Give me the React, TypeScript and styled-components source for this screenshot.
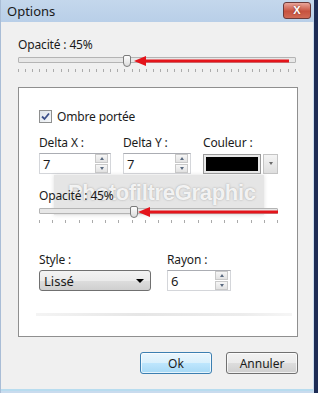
import React from 'react';
import styled, { createGlobalStyle } from 'styled-components';

const Global = createGlobalStyle`
  html, body { margin: 0; padding: 0; background: #1d2c55; }
  body { font-family: "Noto Sans", "Open Sans", "DejaVu Sans", sans-serif; font-size: 12px; color: #1b1b1b; }
`;

const Window = styled.div`
  width: 314px;
  height: 393px;
  display: flex;
  flex-direction: column;
  background: #c9dbee;
  box-sizing: border-box;
  border-left: 1px solid #a9bdd6;
`;

const TitleBar = styled.div`
  height: 22px;
  display: flex;
  align-items: center;
  padding: 0 3px 0 6px;
  background: linear-gradient(#c4d7ec, #b9cfe8);
`;

const Title = styled.div`
  font-size: 13px;
  color: #1a1a1a;
`;

const CloseButton = styled.div`
  margin-left: auto;
  width: 26px;
  height: 15px;
  margin-top: -2px;
  border: 1px solid #6b3a3a;
  border-radius: 3px;
  background: linear-gradient(#e9a59a, #c7523f 55%, #d06a55);
  display: flex;
  align-items: center;
  justify-content: center;
  color: #fff;
  font-size: 11px;
  font-weight: bold;
  font-family: "Liberation Sans", sans-serif;
  text-shadow: 0 0 2px #7a2a20;
`;

const Body = styled.div`
  flex: 1;
  background: #f0f0f0;
  display: flex;
  flex-direction: column;
  padding: 15px 16px 0 17px;
  margin: 0 1px 2px 0;
  border-bottom: 2px solid #b8dcef;
`;

const Label = styled.div`
  line-height: 15px;
  white-space: nowrap;
  letter-spacing: -0.15px;
`;

const SliderBox = styled.div<{ $w: number }>`
  position: relative;
  width: ${p => p.$w}px;
  height: 20px;
  margin-top: 3px;
`;

const Track = styled.div`
  position: absolute;
  left: 0;
  right: 0;
  top: 2px;
  height: 4px;
  background: #e7e7e7;
  border: 1px solid #b4b4b4;
  border-radius: 1px;
`;

const Thumb = styled.div`
  position: absolute;
  top: 0;
  width: 6px;
  height: 10px;
  background: linear-gradient(#fdfdfd, #dcdcdc);
  border: 1px solid #7b7b7b;
  border-radius: 2px 2px 4px 4px;
`;

const Ticks = styled.div`
  position: absolute;
  left: 0;
  right: 0;
  top: 14px;
  display: flex;
  justify-content: space-between;
`;

const Tick = styled.div`
  width: 1px;
  height: 3px;
  background: #ababab;
`;

const ArrowSvg = styled.svg`
  position: absolute;
  top: 0;
`;

function Slider({ width, thumb, ticks, arrowFrom, arrowTo }: { width: number; thumb: number; ticks: number; arrowFrom: number; arrowTo: number }) {
  const len = arrowTo - arrowFrom;
  return (
    <SliderBox $w={width}>
      <Track />
      <Ticks>
        {Array.from({ length: ticks }).map((_, i) => <Tick key={i} />)}
      </Ticks>
      <Thumb style={{ left: thumb }} />
      <ArrowSvg width={len} height={12} style={{ left: arrowFrom }} viewBox={`0 0 ${len} 12`}>
        <polygon points="0,6 12,1 12,11" fill="#e4141b" />
        <rect x={10} y={4.5} width={len - 10} height={3} fill="#e4141b" />
      </ArrowSvg>
    </SliderBox>
  );
}

const Panel = styled.div`
  position: relative;
  margin-top: 12px;
  width: 280px;
  height: 250px;
  box-sizing: border-box;
  background: #fff;
  border: 1px solid #8f8f8f;
  padding: 21px 0 0 20px;
  display: flex;
  flex-direction: column;
`;

const CheckRow = styled.div`
  display: flex;
  align-items: center;
  gap: 5px;
`;

const CheckBox = styled.div`
  width: 11px;
  height: 11px;
  border: 1px solid #8e8f8f;
  background: linear-gradient(135deg, #dde3ea, #f6f8fa);
  display: flex;
  align-items: center;
  justify-content: center;
`;

const FieldRow = styled.div<{ $gap: number; $top: number }>`
  display: flex;
  gap: ${p => p.$gap}px;
  margin-top: ${p => p.$top}px;
`;

const Field = styled.div`
  display: flex;
  flex-direction: column;
  gap: 3px;
`;

const InputBox = styled.div<{ $w: number }>`
  width: ${p => p.$w}px;
  height: 21px;
  box-sizing: border-box;
  border: 1px solid #d4d6da;
  border-top-color: #abadb3;
  background: #fff;
  display: flex;
  align-items: center;
  padding: 0 2px 0 3px;
`;

const Value = styled.div`
  flex: 1;
  font-size: 13px;
`;

const Spin = styled.div`
  display: flex;
  flex-direction: column;
  gap: 1px;
`;

const SpinBtn = styled.div<{ $up?: boolean }>`
  width: 11px;
  height: 7px;
  border: 1px solid #c9c9c9;
  background: linear-gradient(#f6f6f6, #e2e2e2);
  display: flex;
  align-items: center;
  justify-content: center;
  &::after {
    content: '';
    border-left: 2.5px solid transparent;
    border-right: 2.5px solid transparent;
    ${p => (p.$up ? 'border-bottom: 3px solid #5a6a80;' : 'border-top: 3px solid #5a6a80;')}
  }
`;

function SpinInput({ value, width }: { value: string; width: number }) {
  return (
    <InputBox $w={width}>
      <Value>{value}</Value>
      <Spin>
        <SpinBtn $up />
        <SpinBtn />
      </Spin>
    </InputBox>
  );
}

const ColorPicker = styled.div`
  display: flex;
  align-items: center;
  gap: 3px;
  height: 21px;
`;

const Swatch = styled.div`
  width: 52px;
  height: 14px;
  background: #000;
  border: 2px solid #e8e8e8;
  outline: 1px solid #9a9a9a;
  margin-left: 1px;
`;

const DropBtn = styled.div`
  width: 13px;
  height: 18px;
  border: 1px solid #c4c4c4;
  background: linear-gradient(#f4f4f4, #dedede);
  display: flex;
  align-items: center;
  justify-content: center;
  &::after {
    content: '';
    border-left: 2.5px solid transparent;
    border-right: 2.5px solid transparent;
    border-top: 3px solid #6a6a6a;
  }
`;

const Opacity2 = styled.div`
  position: relative;
  z-index: 1;
  margin-top: 14px;
`;

const Select = styled.div`
  width: 112px;
  height: 21px;
  box-sizing: border-box;
  border: 1px solid #707070;
  border-radius: 3px;
  background: linear-gradient(#f3f3f3 0%, #ebebeb 50%, #dddddd 51%, #cfcfcf 100%);
  display: flex;
  align-items: center;
  padding: 0 6px 0 4px;
  font-size: 13px;
  &::after {
    content: '';
    margin-left: auto;
    border-left: 4px solid transparent;
    border-right: 4px solid transparent;
    border-top: 4px solid #000;
  }
`;

const FadeBand = styled.div`
  margin: 22px 0 0 -3px;
  width: 256px;
  height: 3px;
  background: linear-gradient(90deg, #f4f4f4, #e6e6e6 40%, #ececec 80%, #f6f6f6);
`;

const Watermark = styled.div`
  position: absolute;
  left: 35px;
  top: 87px;
  width: 210px;
  height: 40px;
  background: rgba(170, 170, 170, 0.3);
  box-shadow: 0 0 4px rgba(170, 170, 170, 0.4);
  display: flex;
  align-items: center;
  padding: 0 0 4px 14px;
  box-sizing: border-box;
  font-family: "Liberation Sans", Arial, sans-serif;
  font-weight: bold;
  font-size: 22px;
  color: rgba(255, 255, 255, 0.85);
  text-shadow: 0 0 2px rgba(120, 120, 120, 0.6);
  letter-spacing: -0.3px;
`;

const Buttons = styled.div`
  display: flex;
  justify-content: flex-end;
  gap: 14px;
  margin-top: 15px;
  width: 280px;
`;

const Button = styled.div<{ $primary?: boolean }>`
  width: 72px;
  height: 22px;
  box-sizing: border-box;
  border-radius: 3px;
  display: flex;
  align-items: center;
  justify-content: center;
  font-size: 12px;
  border: 1px solid ${p => (p.$primary ? '#3c7fb1' : '#707070')};
  background: ${p =>
    p.$primary
      ? 'linear-gradient(#eaf6fd 0%, #d9f0fc 50%, #bee6fd 51%, #a7d9f5 100%)'
      : 'linear-gradient(#f2f2f2 0%, #ebebeb 50%, #dddddd 51%, #cfcfcf 100%)'};
  box-shadow: inset 0 0 0 1px rgba(255, 255, 255, 0.7);
`;

export default function App() {
  return (
    <>
      <Global />
      <Window>
        <TitleBar>
          <Title>Options</Title>
          <CloseButton>X</CloseButton>
        </TitleBar>
        <Body>
          <Label>Opacité : 45%</Label>
          <Slider width={278} thumb={105} ticks={40} arrowFrom={116} arrowTo={271} />
          <Panel>
            <CheckRow>
              <CheckBox>
                <svg width="9" height="9" viewBox="0 0 9 9">
                  <path d="M1 4.5 L3.5 7 L8 1.5" stroke="#3b4f8a" strokeWidth="1.8" fill="none" />
                </svg>
              </CheckBox>
              <Label>Ombre portée</Label>
            </CheckRow>
            <FieldRow $gap={12} $top={11}>
              <Field>
                <Label>Delta X :</Label>
                <SpinInput value="7" width={72} />
              </Field>
              <Field>
                <Label>Delta Y :</Label>
                <SpinInput value="7" width={68} />
              </Field>
              <Field>
                <Label>Couleur :</Label>
                <ColorPicker>
                  <Swatch />
                  <DropBtn />
                </ColorPicker>
              </Field>
            </FieldRow>
            <Watermark>PhotofiltreGraphic</Watermark>
            <Opacity2>
              <Label>Opacité : 45%</Label>
              <Slider width={239} thumb={91} ticks={19} arrowFrom={99} arrowTo={239} />
            </Opacity2>
            <FieldRow $gap={16} $top={26}>
              <Field>
                <Label>Style :</Label>
                <Select>Lissé</Select>
              </Field>
              <Field>
                <Label>Rayon :</Label>
                <SpinInput value="6" width={64} />
              </Field>
            </FieldRow>
            <FadeBand />
          </Panel>
          <Buttons>
            <Button $primary>Ok</Button>
            <Button>Annuler</Button>
          </Buttons>
        </Body>
      </Window>
    </>
  );
}
